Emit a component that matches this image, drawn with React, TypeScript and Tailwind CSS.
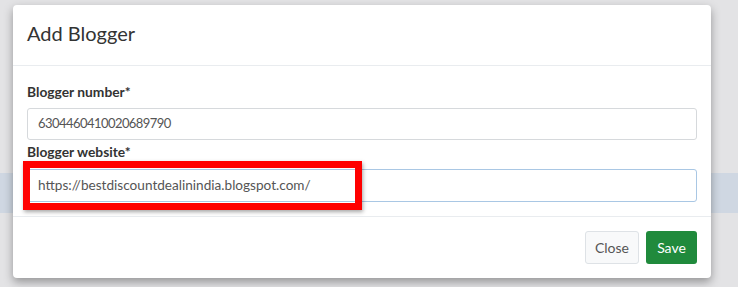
export default function App() {
  return (
    <div className="relative h-[287px] w-[738px] overflow-hidden bg-[#e3e3e5] font-['Lato',sans-serif]">
      {/* page behind the backdrop */}
      <div className="pt-[173px]">
        <div className="h-[40px] bg-[#cfd7e2]" />
      </div>

      {/* modal */}
      <div className="absolute left-[13px] top-[5px] flex w-[698px] flex-col rounded-[4px] bg-white shadow-[0_4px_10px_rgba(0,0,0,0.35)]">
        <div className="flex h-[61px] items-center border-b border-[#e9ecef] px-[14px] pb-[5px]">
          <h5 className="text-[20px] leading-none text-[#333]">Add Blogger</h5>
        </div>

        <div className="px-[14px] pb-[14px] pt-[16px]">
          <label className="mb-[6px] block text-[13.8px] font-bold leading-[20px] text-[#333]">Blogger number*</label>
          <div className="flex h-[32px] items-center rounded-[3px] border border-[#d6d9dc] px-[10px] text-[13px] tracking-[-0.55px] text-[#555]">
            6304460410020689790
          </div>
          <label className="mb-[7px] mt-[2px] block text-[13.8px] font-bold leading-[20px] text-[#333]">Blogger website*</label>
          <div className="flex h-[33px] items-center rounded-[3px] border border-[#a9c7e4] px-[10px] text-[13.6px] text-[#555]">
            https://bestdiscountdealinindia.blogspot.com/
          </div>
        </div>

        <div className="flex justify-end gap-[7px] border-t border-[#e9ecef] px-[14px] py-[14px]">
          <button className="h-[33px] w-[54px] rounded-[3px] border border-[#dee2e6] bg-[#f8f9fa] text-[14px] text-[#555]">
            Close
          </button>
          <button className="h-[33px] w-[51px] rounded-[3px] bg-[#208a3c] text-[14px] text-white">Save</button>
        </div>
      </div>

      {/* red highlight */}
      <div className="absolute left-[23px] top-[161px] h-[49px] w-[339px] border-[7px] border-[#ff0000] shadow-[1px_2px_4px_rgba(0,0,0,0.35)]" />
    </div>
  );
}
